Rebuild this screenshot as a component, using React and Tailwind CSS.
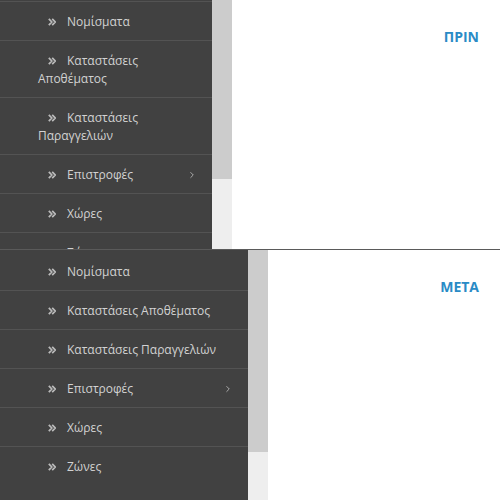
import { ChevronRight } from 'lucide-react'

const items = [
  { label: 'Νομίσματα' },
  { label: 'Καταστάσεις Αποθέματος' },
  { label: 'Καταστάσεις Παραγγελιών' },
  { label: 'Επιστροφές', sub: true },
  { label: 'Χώρες' },
  { label: 'Ζώνες' },
]

function Chevrons() {
  return (
    <svg width="8" height="8" viewBox="0 0 8 8" className="inline-block align-[0px] ml-[10px] mr-[11px]">
      <path d="M0.8 0.8 L3.8 4 L0.8 7.2 M4.2 0.8 L7.2 4 L4.2 7.2" fill="none" stroke="#bababa" strokeWidth="1.7" />
    </svg>
  )
}

function MenuRow({ item, first }) {
  return (
    <div className={`relative pl-[38px] pr-[19px] pt-[11px] pb-[9px] leading-[18px] text-[12px] text-[#d2d2d2] ${first ? '' : 'border-t border-[#535353]'}`}>
      <Chevrons />
      {item.label}
      {item.sub && (
        <ChevronRight size={10} strokeWidth={2} className="absolute right-[15px] top-[15px] text-[#bdbdbd]" />
      )}
    </div>
  )
}

function Panel({ title, sideW, thumbH, height, topGap }) {
  return (
    <div className="flex overflow-hidden" style={{ height }}>
      <div className="shrink-0 bg-[#414141] overflow-hidden" style={{ width: sideW }}>
        <div style={{ height: topGap }} />
        {items.map((it, i) => (
          <MenuRow key={it.label} item={it} first={topGap > 1 && i === 0} />
        ))}
      </div>
      <div className="w-5 shrink-0 bg-[#eeeeee] flex flex-col">
        <div className="bg-[#cccccc]" style={{ height: thumbH }} />
      </div>
      <div className="flex-1 bg-white text-right pr-[21px] pt-[24px]">
        <span className="text-[14px] font-bold text-[#2a8bc6]">{title}</span>
      </div>
    </div>
  )
}

export default function App() {
  return (
    <div className="w-[500px] h-[500px] overflow-hidden bg-white" style={{ fontFamily: '"Open Sans", "Noto Sans", sans-serif' }}>
      <Panel title="ΠΡΙΝ" sideW={212} thumbH={179} height={249} topGap={1} />
      <div className="h-px bg-[#5a5a5a]" />
      <Panel title="ΜΕΤΑ" sideW={248} thumbH={202} height={250} topGap={2} />
    </div>
  )
}
